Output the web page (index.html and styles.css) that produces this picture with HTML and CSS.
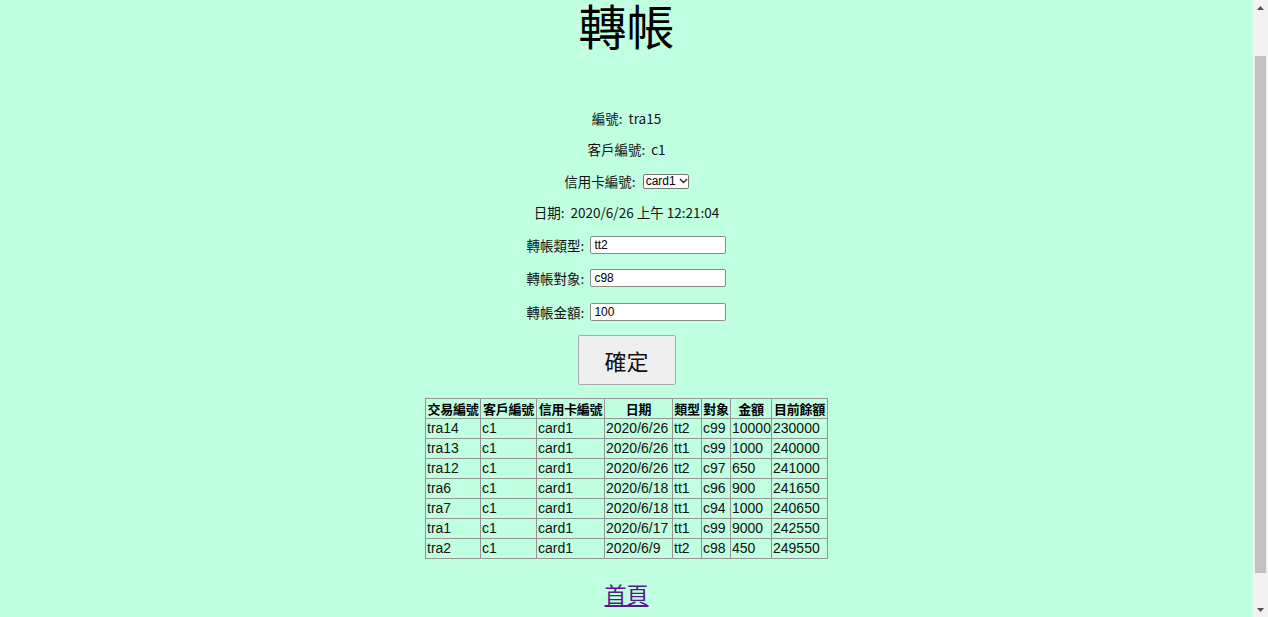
FILE: index.html
```html
<!DOCTYPE html>
<html lang="zh-Hant">
<head>
<meta charset="utf-8">
<title>轉帳</title>
<link rel="stylesheet" href="styles.css">
</head>
<body>
<div class="window">
  <main class="page">
    <h1 class="title">轉帳</h1>
    <div class="field f1"><span class="lbl">編號:</span><span>tra15</span></div>
    <div class="field f2"><span class="lbl">客戶編號:</span><span>c1</span></div>
    <div class="field f3"><span class="lbl">信用卡編號:</span><span class="select">card1<svg class="chev" width="9" height="6" viewBox="0 0 9 6"><path d="M1 1 L4.5 4.5 L8 1" fill="none" stroke="#222" stroke-width="1.4"/></svg></span></div>
    <div class="field f4"><span class="lbl">日期:</span><span>2020/6/26 上午 12:21:04</span></div>
    <div class="field inrow f5"><span class="lbl">轉帳類型:</span><span class="input">tt2</span></div>
    <div class="field inrow f6"><span class="lbl">轉帳對象:</span><span class="input">c98</span></div>
    <div class="field inrow f7"><span class="lbl">轉帳金額:</span><span class="input">100</span></div>
    <button class="btn" type="button">確定</button>
    <table class="tbl">
      <colgroup>
        <col class="c55"><col class="c56"><col class="c68"><col class="c68"><col class="c29"><col class="c29"><col class="c41"><col class="c56">
      </colgroup>
      <thead>
        <tr><th>交易編號</th><th>客戶編號</th><th>信用卡編號</th><th>日期</th><th>類型</th><th>對象</th><th>金額</th><th>目前餘額</th></tr>
      </thead>
      <tbody>
        <tr><td>tra14</td><td>c1</td><td>card1</td><td>2020/6/26</td><td>tt2</td><td>c99</td><td>10000</td><td>230000</td></tr>
        <tr><td>tra13</td><td>c1</td><td>card1</td><td>2020/6/26</td><td>tt1</td><td>c99</td><td>1000</td><td>240000</td></tr>
        <tr><td>tra12</td><td>c1</td><td>card1</td><td>2020/6/26</td><td>tt2</td><td>c97</td><td>650</td><td>241000</td></tr>
        <tr><td>tra6</td><td>c1</td><td>card1</td><td>2020/6/18</td><td>tt1</td><td>c96</td><td>900</td><td>241650</td></tr>
        <tr><td>tra7</td><td>c1</td><td>card1</td><td>2020/6/18</td><td>tt1</td><td>c94</td><td>1000</td><td>240650</td></tr>
        <tr><td>tra1</td><td>c1</td><td>card1</td><td>2020/6/17</td><td>tt1</td><td>c99</td><td>9000</td><td>242550</td></tr>
        <tr><td>tra2</td><td>c1</td><td>card1</td><td>2020/6/9</td><td>tt2</td><td>c98</td><td>450</td><td>249550</td></tr>
      </tbody>
    </table>
    <a class="home" href="#">首頁</a>
  </main>
  <div class="scrollbar">
    <div class="sb-btn"><svg width="7" height="4" viewBox="0 0 7 4"><path d="M0 4 L3.5 0 L7 4 Z" fill="#505050"/></svg></div>
    <div class="sb-track"><div class="sb-thumb"></div></div>
    <div class="sb-btn"><svg width="7" height="4" viewBox="0 0 7 4"><path d="M0 0 L3.5 4 L7 0 Z" fill="#505050"/></svg></div>
  </div>
</div>
</body>
</html>
```
FILE: styles.css
```css
html, body {
  margin: 0;
  height: 617px;
  overflow: hidden;
  background: #c0ffe0;
}
body {
  color: #000;
  font-family: "Noto Sans CJK TC", "Noto Sans CJK SC", sans-serif;
}
.window {
  display: flex;
  height: 617px;
}
.page {
  flex: 1;
  display: flex;
  flex-direction: column;
  align-items: center;
  overflow: hidden;
}
.title {
  margin: 0;
  font-size: 48px;
  line-height: 48px;
  height: 52px;
  font-weight: normal;
}
.field {
  height: 20px;
  line-height: 20px;
  font-size: 13.5px;
  color: #111;
  display: flex;
  align-items: center;
  gap: 6px;
  white-space: nowrap;
}
.f1 { margin-top: 56px; }
.f2 { margin-top: 11px; }
.f3 { margin-top: 12px; }
.f4 { margin-top: 11px; }
.inrow { height: 18px; gap: 6px; }
.f5 { margin-top: 14px; }
.f6 { margin-top: 15px; }
.f7 { margin-top: 16px; }
.select {
  display: inline-flex;
  align-items: center;
  gap: 3px;
  box-sizing: border-box;
  height: 15px;
  width: 46px;
  padding: 0 2px;
  margin-left: 1px;
  border: 1px solid #767676;
  background: #fff;
  border-radius: 2px;
  font-family: "Liberation Sans", Arial, sans-serif;
  font-size: 12px;
  line-height: 13px;
  color: #000;
}
.chev { flex: none; }
.input {
  display: inline-block;
  box-sizing: border-box;
  width: 136px;
  height: 18px;
  padding: 0 3px;
  border: 1px solid #8a8a8a;
  border-radius: 2px;
  background: #fff;
  font-family: "Liberation Sans", Arial, sans-serif;
  font-size: 12px;
  line-height: 16px;
  color: #000;
}
.btn {
  margin-top: 14px;
  box-sizing: border-box;
  width: 98px;
  height: 50px;
  padding: 0;
  border: 1px solid #a8a8a8;
  border-radius: 2px;
  background: #efefef;
  color: #111;
  font-family: "Noto Sans CJK TC", sans-serif;
  font-size: 22px;
}
.tbl {
  margin-top: 13px;
  border-collapse: collapse;
  table-layout: fixed;
  width: 403px;
  border: 1px solid #949494;
}
.c55 { width: 55px; }
.c56 { width: 56px; }
.c68 { width: 68px; }
.c29 { width: 29px; }
.c41 { width: 41px; }
.tbl th, .tbl td {
  border: 1px solid #949494;
  padding: 0 1px;
  height: 19px;
  line-height: 19px;
  white-space: nowrap;
  overflow: visible;
}
.tbl th {
  font-size: 13px;
  font-weight: bold;
  text-align: center;
  letter-spacing: -0.3px;
}
.tbl td {
  font-family: "Liberation Sans", "Noto Sans CJK TC", sans-serif;
  font-size: 14px;
  text-align: left;
  color: #111;
}
.home {
  margin-top: 18px;
  font-size: 22px;
  line-height: 32px;
  color: #551a8b;
  text-decoration: underline;
}
.scrollbar {
  flex: none;
  width: 15px;
  background: #f1f1f1;
  display: flex;
  flex-direction: column;
}
.sb-btn {
  height: 15px;
  display: flex;
  align-items: center;
  justify-content: center;
}
.sb-track {
  flex: 1;
  padding: 41px 2px 29px;
  display: flex;
}
.sb-thumb {
  flex: 1;
  background: #c1c1c1;
}
```
